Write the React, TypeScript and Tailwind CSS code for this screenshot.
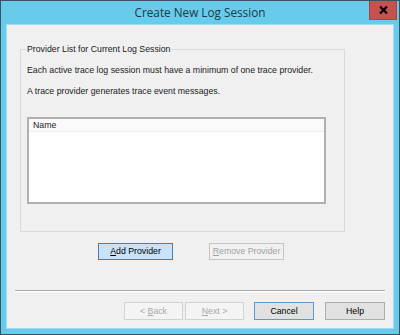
import React from "react";

const F = { fontFamily: '"Liberation Sans", Arial, sans-serif' } as const;

function Btn({
  children,
  className,
}: {
  children: React.ReactNode;
  className: string;
}) {
  return (
    <div
      className={
        "flex items-center justify-center border text-[8.75px] leading-none whitespace-nowrap " +
        className
      }
    >
      {children}
    </div>
  );
}

export default function App() {
  return (
    <div
      style={F}
      className="w-[400px] h-[335px] border border-[#3c5262] bg-[#67cbea] flex flex-col"
    >
      <div className="relative h-[23px] flex items-center justify-center">
        <span
          className="text-[11.75px] text-[#1d3848] leading-none mt-[1px] whitespace-nowrap"
          style={{ fontFamily: '"Open Sans", "Noto Sans", sans-serif' }}
        >
          Create New Log Session
        </span>
        <div className="absolute top-0 right-[2px] w-[28px] h-[19px] bg-[#c75050] border border-[#b04444] border-t-0 flex items-center justify-center">
          <svg width="9" height="8" viewBox="0 0 9 8">
            <path d="M1 0.5 L8 7.5 M8 0.5 L1 7.5" stroke="#000" strokeWidth="2.2" />
          </svg>
        </div>
      </div>
      <div className="mx-[5px] h-[305px] border border-[#9fdcf1] bg-[#f0f0f0] flex flex-col text-black">
        <div className="relative ml-[13px] mt-[24px] w-[325px] h-[183px] border border-[#dadada] shrink-0">
          <span className="absolute -top-[6px] left-[5px] px-[1px] bg-[#f0f0f0] text-[8.75px] leading-[11px] text-[#1a1a1a] whitespace-nowrap">
            Provider List for Current Log Session
          </span>
          <div className="pl-[6px] pt-[15px] text-[8.75px] leading-[11px] text-[#1a1a1a] whitespace-nowrap">
            <div>Each active trace log session must have a minimum of one trace provider.</div>
            <div className="mt-[10px]">A trace provider generates trace event messages.</div>
          </div>
          <div className="ml-[6px] mt-[20px] w-[299px] h-[87px] border-2 border-[#b0b0b0] bg-white">
            <div className="h-[13px] bg-[#fafafa] border-b border-[#eeeeee] pl-[4px] text-[8.75px] leading-[12px] text-[#1a1a2a]">
              Name
            </div>
          </div>
        </div>
        <div className="flex mt-[11px] ml-[91px] gap-[36px]">
          <Btn className="w-[75px] h-[17px] bg-[#c9e2f7] border-[#3f82b8] text-black">
            <span>
              <u>A</u>dd Provider
            </span>
          </Btn>
          <Btn className="w-[75px] h-[17px] bg-[#f1f1f1] border-[#c4c4c4] text-[#a2a2a2]">
            <span>
              <u>R</u>emove Provider
            </span>
          </Btn>
        </div>
        <div className="mt-[30px] ml-[8px] w-[370px] h-[2px] border-t border-[#a8a8a8] border-b border-b-white" />
        <div className="flex mt-[10px] justify-end mr-[8px]">
          <Btn className="w-[59px] h-[18px] bg-[#f4f4f4] border-[#d2d2d2] text-[#a8a8a8]">
            <span>
              &lt; <u>B</u>ack
            </span>
          </Btn>
          <Btn className="ml-[2px] w-[59px] h-[18px] bg-[#f4f4f4] border-[#d2d2d2] text-[#a8a8a8]">
            <span>
              <u>N</u>ext &gt;
            </span>
          </Btn>
          <Btn className="ml-[10px] w-[60px] h-[18px] bg-[#e1e1e1] border-[#5d9ad0] text-black">
            <span>Cancel</span>
          </Btn>
          <Btn className="ml-[11px] w-[60px] h-[18px] bg-[#e1e1e1] border-[#adadad] text-black">
            <span>Help</span>
          </Btn>
        </div>
      </div>
    </div>
  );
}
